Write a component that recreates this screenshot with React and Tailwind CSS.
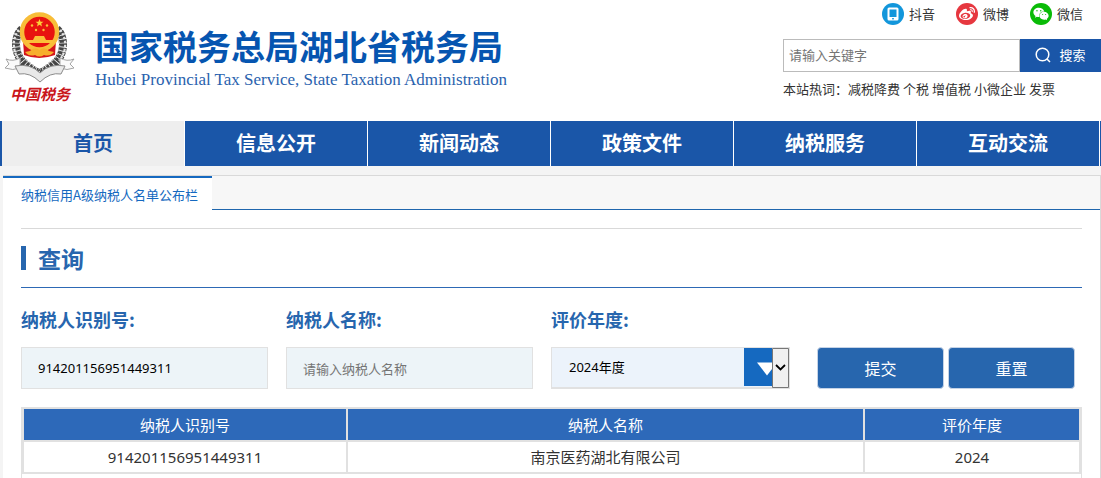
import { FaWeibo, FaWeixin } from 'react-icons/fa';

const socials = [
  { name: '抖音', color: 'bg-[#1296db]', icon: <PhoneIcon /> },
  { name: '微博', color: 'bg-[#e6373f]', icon: <FaWeibo className="size-4 text-white" /> },
  { name: '微信', color: 'bg-[#09bb07]', icon: <FaWeixin className="size-4 text-white" /> },
];

const hotWords = ['减税降费', '个税', '增值税', '小微企业', '发票'];

const navItems = ['首页', '信息公开', '新闻动态', '政策文件', '纳税服务', '互动交流'];

const rows = [{ id: '914201156951449311', name: '南京医药湖北有限公司', year: '2024' }];

function PhoneIcon() {
  return (
    <svg className="size-4" viewBox="0 0 16 16">
      <rect x="2.500" y="1.500" width="11" height="13" rx="1.500" fill="#fff" />
      <rect x="4.500" y="3.500" width="7" height="7.500" fill="#1296db" />
      <rect x="7" y="12" width="2" height="1.400" rx=".7" fill="#1296db" />
    </svg>
  );
}

function Emblem() {
  return (
    <svg className="h-[92px] w-[70px] shrink-0" viewBox="0 0 70 92" fill="none">
      {/* wheat ears */}
      <g stroke="#454545" strokeWidth="8" strokeDasharray="3.200 .8">
        <path d="M17 17C9 24 9 40 17 49C22 55 28 58 34 61" />
        <path d="M52 17C60 24 60 40 52 49C47 55 41 58 35 61" />
      </g>
      <g stroke="#e4e4e4" strokeWidth="2.200" strokeDasharray="2.400 1.600">
        <path d="M14 18C6 27 8 41 15 49" />
        <path d="M55 18C63 27 61 41 54 49" />
      </g>
      <g stroke="#b5b5b5" strokeWidth="1.400" strokeDasharray="2 2">
        <path d="M18 22C13 29 13 39 20 47L34 58" />
        <path d="M51 22C56 29 56 39 49 47L35 58" />
      </g>
      <path d="M18 28L19 43Q34 49 50 43L51 28Z" fill="#d5151a" />
      <circle cx="34.500" cy="20" r="17.500" fill="#e8130f" stroke="#f8bd38" strokeWidth="4.500" />
      <path d="M34.500 7l1.100 2.800h2.900l-2.300 1.800.8 2.800-2.500-1.700-2.500 1.700.8-2.800-2.300-1.800h2.900z" fill="#fbd038" />
      <g fill="#fbc038">
        <circle cx="27" cy="13.500" r="1.200" />
        <circle cx="42" cy="13.500" r="1.200" />
        <circle cx="31" cy="18" r="1.200" />
        <circle cx="38.500" cy="18" r="1.200" />
        <path d="M30 24h9l2 4h7v3H21v-3h7z" />
      </g>
      <path d="M25 39q5-5 9.500-1 5-4 9.500 1l5 1q-4 5-10 3-4.500 3-9 0-6 2-10-3z" fill="#f7ae2c" />
      {/* ribbon */}
      <path d="M1 47q7 3 14-1v10q-7 3-15 0l4-4zM69 47q-7 3-14-1v10q7 3 14 0l-4-4z" fill="#fafafa" stroke="#a5a5a5" />
      <path d="M10 54q15-3 25 7 10-10 25-7l-4 8q-11-2-21 8-10-10-21-8z" fill="#e9e9e9" stroke="#8b8b8b" />
      <text x="5" y="88" fontSize="15" fontStyle="italic" fontWeight="700" fill="#c9151b" fontFamily="'Noto Sans CJK SC', sans-serif">
        中国税务
      </text>
    </svg>
  );
}

function Header() {
  return (
    <header className="flex justify-between">
      <div className="flex pt-3 pl-[5px]">
        <Emblem />
        <div className="pt-[11px] pl-5">
          <h1 className="text-[34px] leading-[46px] font-bold text-[#0655b0]">国家税务总局湖北省税务局</h1>
          <p className="font-['Liberation_Serif',serif] text-[17px] leading-[22px] text-[#2a62ae]">
            Hubei Provincial Tax Service, State Taxation Administration
          </p>
        </div>
      </div>
      <div className="w-[318px] pt-[3px]">
        <ul className="flex justify-end gap-[21px] pr-[18px]">
          {socials.map((s) => (
            <li key={s.name}>
              <a href="#" className="flex items-center gap-[5px]">
                <span className={`flex size-[22px] items-center justify-center rounded-full ${s.color}`}>{s.icon}</span>
                {s.name}
              </a>
            </li>
          ))}
        </ul>
        <form className="mt-[14px] flex h-[33px]">
          <input
            type="text"
            aria-label="站内搜索"
            placeholder="请输入关键字"
            className="min-w-0 flex-1 border border-[#bbb] bg-white px-[5px] pb-[2px] placeholder:text-[#757575]"
          />
          <button type="button" className="flex w-[81px] items-center justify-center gap-2 bg-[#1a56a8] pb-[2px] text-white">
            <svg className="size-4" viewBox="0 0 16 16" fill="none" stroke="currentColor" strokeWidth="1.500">
              <circle cx="7.500" cy="7.500" r="6.300" />
              <path d="M12 12l3 3" />
            </svg>
            搜索
          </button>
        </form>
        <p className="mt-[7px] flex leading-5">
          本站热词：
          <span className="flex gap-[3px]">
            {hotWords.map((w) => (
              <a key={w} href="#">{w}</a>
            ))}
          </span>
        </p>
      </div>
    </header>
  );
}

function Field({ id, label, children }) {
  return (
    <div>
      <label htmlFor={id} className="block text-lg leading-6 font-bold text-[#2766ae]">{label}</label>
      <div className="mt-4">{children}</div>
    </div>
  );
}

export default function App() {
  return (
    <div className="min-h-screen bg-white font-['Noto_Sans_CJK_SC',sans-serif] text-[13px] text-[#333]">
      <Header />
      <nav className="mt-[17px] flex h-[45px] border-r border-l-2 border-[#1a56a8] bg-[#1a56a8]">
        {navItems.map((item, i) => (
          <a
            key={item}
            href="#"
            className={`flex flex-1 justify-center border-r border-white text-xl leading-[43px] font-bold ${
              i === 0 ? 'bg-[#eee] text-[#1a56a8]' : 'text-white'
            }`}
          >
            {item}
          </a>
        ))}
      </nav>

      <div className="bg-[#f4f4f4] pt-[9px] pl-[3px]">
        <div className="flex h-[35px] border-t border-r border-[#d9d9d9] bg-[#f7f7f7]">
          <a href="#" className="border-t-2 border-[#1569c0] bg-white pr-[14px] pl-[18px] leading-[34px] text-[#1569c0]">
            纳税信用A级纳税人名单公布栏
          </a>
          <span className="flex-1 border-b border-[#1f66ad]" />
        </div>
        <main className="min-h-[268px] border-r border-[#d9d9d9] bg-white px-[18px] pt-[18px]">
          <div className="border-t border-b border-t-[#d9d9d9] border-b-[#2d69b5] py-[17px]">
            <h2 className="flex items-center gap-3 text-[23px] leading-6 font-bold text-[#2766ae]">
              <span className="h-6 w-[5px] bg-[#2766ae]" />
              查询
            </h2>
          </div>

          <form className="mt-[19px] flex items-end">
            <div className="flex gap-[18px]">
              <Field id="taxId" label="纳税人识别号:">
                <input
                  id="taxId"
                  type="text"
                  defaultValue="914201156951449311"
                  className="h-[42px] w-[247px] border border-[#e1e1e1] bg-[#edf4f8] px-4 font-['Noto_Sans','Noto_Sans_CJK_SC',sans-serif] text-black"
                />
              </Field>
              <Field id="taxName" label="纳税人名称:">
                <input
                  id="taxName"
                  type="text"
                  placeholder="请输入纳税人名称"
                  className="h-[42px] w-[247px] border border-[#e1e1e1] bg-[#edf4f8] px-4 placeholder:text-[#757575]"
                />
              </Field>
              <Field id="year" label="评价年度:">
                <div className="relative h-[42px] w-[239px]">
                  <select
                    id="year"
                    className="h-full w-full appearance-none border border-b-2 border-[#e1e1e1] bg-[#ecf3fb] px-[17px] font-['Noto_Sans','Noto_Sans_CJK_SC',sans-serif] text-black"
                  >
                    <option>2024年度</option>
                  </select>
                  <span className="pointer-events-none absolute inset-y-px right-px flex">
                    <svg className="h-[38px] w-7" viewBox="0 0 28 38">
                      <path fill="#1569c0" d="M0 0h28v38H0z" />
                      <path fill="#fff" d="M13 14.500h20l-10 13z" />
                    </svg>
                    <svg className="h-10 w-[17px]" viewBox="0 0 17 40">
                      <path fill="#f0f0f0" stroke="#777" d="M.5.5h16v39H.5z" />
                      <path fill="none" stroke="#000" strokeWidth="1.800" d="M4 17l4.500 4.500L13 17" />
                    </svg>
                  </span>
                </div>
              </Field>
            </div>
            <div className="ml-[27px] flex gap-1">
              <button type="button" className="h-[42px] w-[127px] rounded border border-[#c5d3e6] bg-[#2766ae] text-base text-white">提交</button>
              <button type="reset" className="h-[42px] w-[127px] rounded border border-[#c5d3e6] bg-[#2766ae] text-base text-white">重置</button>
            </div>
          </form>

          <div className="mt-[18px] min-h-[71px] border-x border-[#e1e1e1]">
            <table className="w-full table-fixed border-collapse text-center font-['Noto_Sans','Noto_Sans_CJK_SC',sans-serif] text-[15px] leading-6">
              <thead>
                <tr className="h-[33px] bg-[#2d69b9] text-white">
                  <th className="w-[324px] border-2 border-[#e1e1e1] font-normal">纳税人识别号</th>
                  <th className="border-2 border-[#e1e1e1] font-normal">纳税人名称</th>
                  <th className="w-[216px] border-2 border-[#e1e1e1] font-normal">评价年度</th>
                </tr>
              </thead>
              <tbody>
                {rows.map((r) => (
                  <tr key={r.id} className="h-8">
                    <td className="border-2 border-[#e1e1e1]">{r.id}</td>
                    <td className="border-2 border-[#e1e1e1]">{r.name}</td>
                    <td className="border-2 border-[#e1e1e1]">{r.year}</td>
                  </tr>
                ))}
              </tbody>
            </table>
          </div>
        </main>
      </div>
    </div>
  );
}
